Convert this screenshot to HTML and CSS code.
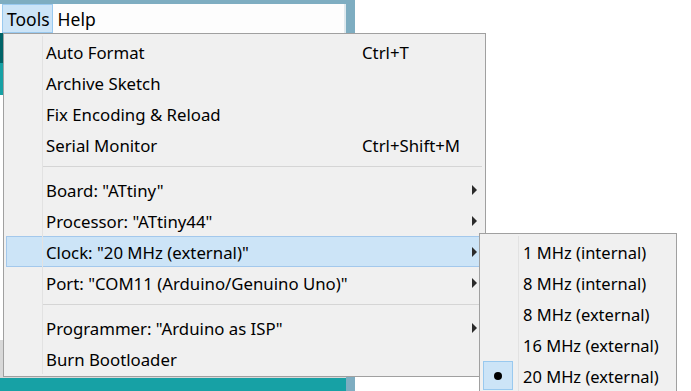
FILE: index.html
```html
<!DOCTYPE html>
<html>
<head>
<meta charset="utf-8">
<link rel="stylesheet" href="styles.css">
</head>
<body>
<div class="screen">
  <div class="window">
    <div class="menubar">
      <span class="mb-item active">Tools</span>
      <span class="mb-item">Help</span>
    </div>
    <div class="editor">
      <div class="toolbar"></div>
      <div class="tabs"></div>
      <div class="code"></div>
      <div class="console"></div>
      <div class="status"></div>
    </div>
  </div>

  <div class="menu">
    <div class="item"><span>Auto Format</span><span>Ctrl+T</span><span></span></div>
    <div class="item"><span>Archive Sketch</span><span></span><span></span></div>
    <div class="item"><span>Fix Encoding &amp; Reload</span><span></span><span></span></div>
    <div class="item"><span>Serial Monitor</span><span>Ctrl+Shift+M</span><span></span></div>
    <div class="sep"></div>
    <div class="item"><span>Board: "ATtiny"</span><span></span><span class="arrow"></span></div>
    <div class="item"><span>Processor: "ATtiny44"</span><span></span><span class="arrow"></span></div>
    <div class="item hot"><span>Clock: "20 MHz (external)"</span><span></span><span class="arrow"></span></div>
    <div class="item"><span>Port: "COM11 (Arduino/Genuino Uno)"</span><span></span><span class="arrow"></span></div>
    <div class="sep"></div>
    <div class="item"><span>Programmer: "Arduino as ISP"</span><span></span><span class="arrow"></span></div>
    <div class="item"><span>Burn Bootloader</span><span></span><span></span></div>
  </div>

  <div class="submenu">
    <div class="sub-item"><span class="check"></span><span class="label">1 MHz (internal)</span></div>
    <div class="sub-item"><span class="check"></span><span class="label">8 MHz (internal)</span></div>
    <div class="sub-item"><span class="check"></span><span class="label">8 MHz (external)</span></div>
    <div class="sub-item"><span class="check"></span><span class="label">16 MHz (external)</span></div>
    <div class="sub-item"><span class="check checked"><span class="bullet"></span></span><span class="label">20 MHz (external)</span></div>
  </div>
</div>
</body>
</html>
```

FILE: styles.css
```css
html, body {
  margin: 0;
  padding: 0;
  background: #ffffff;
}

.screen {
  position: relative;
  width: 691px;
  height: 391px;
  overflow: hidden;
  background: #ffffff;
  font-family: "Noto Sans", "Open Sans", sans-serif;
  color: #000;
}

.window {
  width: 355px;
  height: 391px;
  box-sizing: border-box;
  padding: 4px 9px 0 0;
  background: #7eadc1;
  display: flex;
  flex-direction: column;
}

.menubar {
  height: 29px;
  flex: none;
  background: #fdfdfd;
  border-right: 2px solid #dfe9ee;
  display: flex;
  align-items: stretch;
  padding-left: 2px;
}

.mb-item {
  font-size: 17.5px;
  line-height: 28px;
  padding: 0 2px 0 4px;
  border: 1px solid transparent;
}

.mb-item.active {
  background: #cce4f7;
  border-color: #99c9ef;
}

.editor {
  flex: 1;
  display: flex;
  flex-direction: column;
}

.toolbar {
  height: 30px;
  background: #006468;
}

.tabs {
  height: 32px;
  background: #17a1a5;
}

.code {
  flex: 1;
  background: #ffffff;
}

.console {
  height: 38px;
  background: #d8d8d8;
}

.status {
  height: 13px;
  background: #17a1a5;
}

/* dropdown menu */
.menu {
  position: absolute;
  left: 3px;
  top: 33px;
  width: 483px;
  height: 344px;
  box-sizing: border-box;
  border: 1px solid #a0a0a0;
  background: #f0f0f0;
  padding: 2px;
  font-size: 16.8px;
}

.menu::before,
.submenu::before {
  content: "";
  position: absolute;
  left: 38px;
  top: 2px;
  bottom: 2px;
  width: 1px;
  background: #e2e2e2;
  z-index: 1;
}

.item {
  display: grid;
  grid-template-columns: 316px 1fr 16px;
  align-items: center;
  height: 31px;
  box-sizing: border-box;
  border: 1px solid transparent;
  padding-left: 39px;
  padding-top: 2px;
  white-space: nowrap;
}

.item.hot {
  background: #cce4f7;
  border-color: #a3c8ec;
}

.arrow {
  justify-self: start;
  margin-left: 6px;
  margin-top: -2px;
  width: 0;
  height: 0;
  border-left: 5px solid #2b2b2b;
  border-top: 5px solid transparent;
  border-bottom: 5px solid transparent;
}

.sep {
  position: relative;
  height: 14px;
}

.sep::after {
  content: "";
  position: absolute;
  left: 37px;
  right: 1px;
  top: 6px;
  height: 1px;
  background: #d5d5d5;
}

/* submenu */
.submenu {
  position: absolute;
  left: 479px;
  top: 233px;
  width: 198px;
  height: 170px;
  box-sizing: border-box;
  border: 1px solid #a0a0a0;
  background: #f0f0f0;
  padding: 2px;
  font-size: 16.5px;
}

.sub-item {
  display: flex;
  align-items: center;
  height: 31px;
  white-space: nowrap;
}

.check {
  width: 30px;
  height: 29px;
  margin-left: 1px;
  box-sizing: border-box;
  border: 1px solid transparent;
  display: flex;
  align-items: center;
  justify-content: center;
  flex: none;
}

.check.checked {
  background: #cce4f7;
  border-color: #99c9ef;
}

.bullet {
  width: 8px;
  height: 8px;
  border-radius: 50%;
  background: #000;
}

.label {
  margin-left: 10px;
  padding-top: 2px;
}
```
